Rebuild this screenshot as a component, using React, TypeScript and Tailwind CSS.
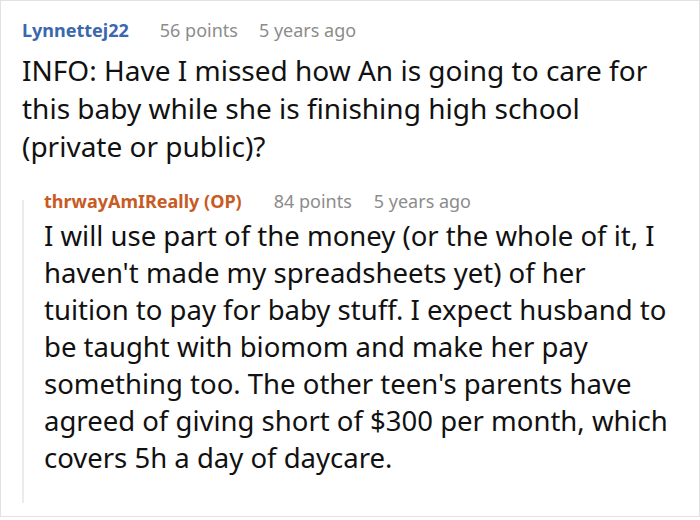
const replyLines = [
  "I will use part of the money (or the whole of it, I",
  "haven't made my spreadsheets yet) of her",
  "tuition to pay for baby stuff. I expect husband to",
  "be taught with biomom and make her pay",
  "something too. The other teen's parents have",
  "agreed of giving short of $300 per month, which",
  "covers 5h a day of daycare.",
];

export default function App() {
  return (
    <div className="w-[700px] h-[520px] bg-white overflow-hidden" style={{ fontFamily: '"Noto Sans", sans-serif' }}>
      <div className="w-[700px] h-[517px] border border-[#e2e2e2] pl-[21px] pr-[8px] pt-[17px]">
        <div className="flex items-baseline text-[18px] leading-[24px]">
          <span className="font-bold text-[#3a68ad]">Lynnettej22</span>
          <span className="ml-[31px] text-[#8c8c8c]">56 points</span>
          <span className="ml-[21px] text-[#8c8c8c]">5 years ago</span>
        </div>
        <p className="mt-[9px] w-[660px] text-[28px] leading-[38px] text-[#111]">
          INFO: Have I missed how An is going to care for this baby while she is finishing high school (private or public)?
        </p>
        <div className="mt-[24px] flex">
          <div className="w-[2px] bg-[#ebebeb] mt-[11px] mb-0" />
          <div className="pl-[20px] pb-[27px]">
            <div className="flex items-baseline text-[18px] leading-[24px]">
              <span className="font-bold text-[#c85a24]">thrwayAmIReally (OP)</span>
              <span className="ml-[32px] text-[#8c8c8c]">84 points</span>
              <span className="ml-[22px] text-[#8c8c8c]">5 years ago</span>
            </div>
            <p className="mt-[4px] text-[27.5px] leading-[37px] text-[#111] whitespace-nowrap">
              {replyLines.map((l, i) => (
                <span key={i} className="block">{l}</span>
              ))}
            </p>
          </div>
        </div>
      </div>
    </div>
  );
}
